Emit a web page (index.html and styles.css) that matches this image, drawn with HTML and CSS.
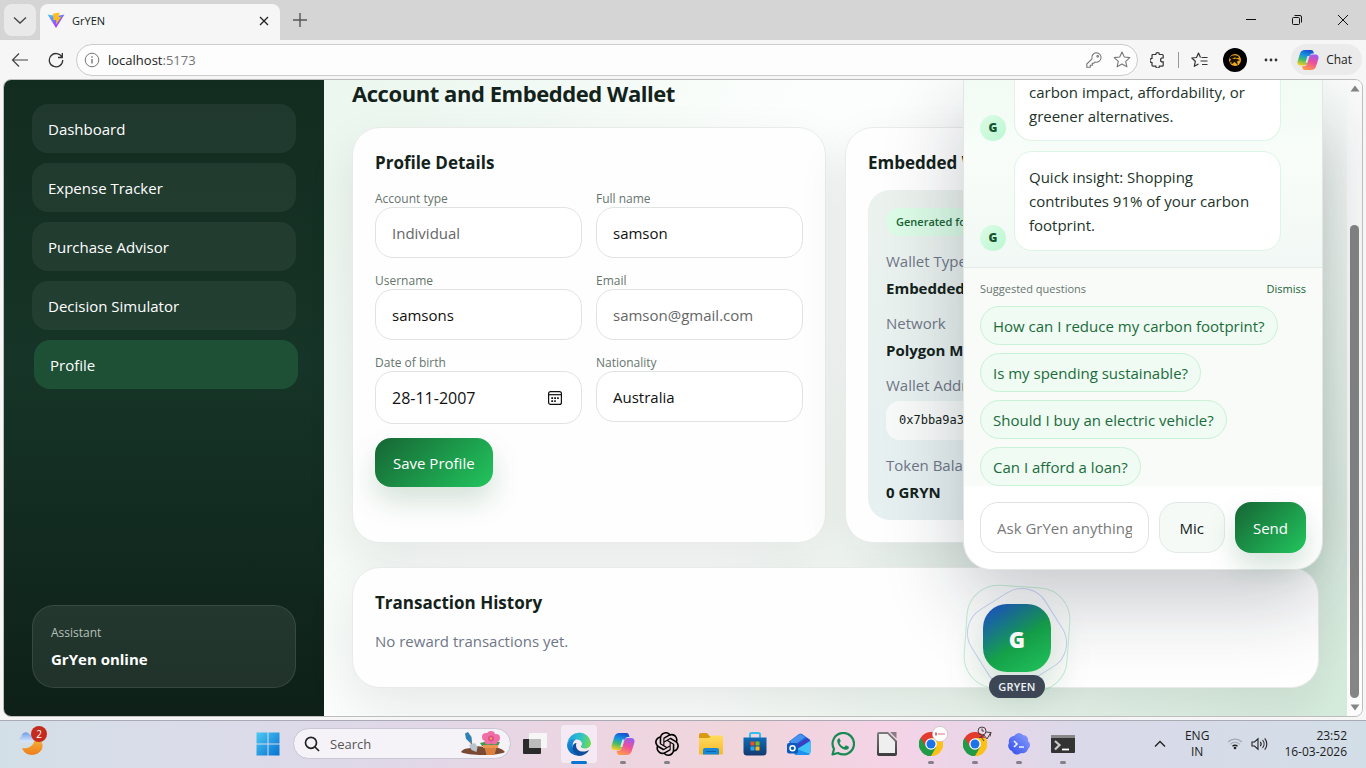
FILE: index.html
```html
<!DOCTYPE html>
<html lang="en">
<head>
    <meta charset="UTF-8">
    <meta name="viewport" content="width=device-width, initial-scale=1.0">
    <title>GrYEN</title>
    <link rel="stylesheet" href="styles.css">
</head>
<body>

<!-- shared gradients and symbols -->
<svg class="defs" width="0" height="0" aria-hidden="true">
    <defs>
        <linearGradient id="cpA" x1="0.6" y1="0" x2="0.3" y2="1">
            <stop offset="0" stop-color="#1b4fd0"/><stop offset=".35" stop-color="#1593e0"/>
            <stop offset=".65" stop-color="#43b96c"/><stop offset="1" stop-color="#f2cf1e"/>
        </linearGradient>
        <linearGradient id="cpB" x1="0.7" y1="0" x2="0.3" y2="1">
            <stop offset="0" stop-color="#9b5cf0"/><stop offset=".45" stop-color="#ec4f9d"/>
            <stop offset="1" stop-color="#ff9a4a"/>
        </linearGradient>
        <linearGradient id="edgeA" x1="0" y1="0.3" x2="1" y2="0.5">
            <stop offset="0" stop-color="#1f9fe0"/><stop offset=".55" stop-color="#2fc3c8"/><stop offset="1" stop-color="#6fdc50"/>
        </linearGradient>
        <linearGradient id="edgeB" x1="0" y1="0" x2="0.6" y2="1">
            <stop offset="0" stop-color="#1697e0"/><stop offset="1" stop-color="#0b5cb8"/>
        </linearGradient>
        <linearGradient id="winG" x1="0" y1="0" x2="1" y2="1">
            <stop offset="0" stop-color="#4cc9f5"/><stop offset="1" stop-color="#0570cf"/>
        </linearGradient>
        <linearGradient id="viteA" x1="0" y1="0" x2="0.7" y2="1">
            <stop offset="0" stop-color="#41d1ff"/><stop offset=".6" stop-color="#8b5cff"/><stop offset="1" stop-color="#bd34fe"/>
        </linearGradient>
        <linearGradient id="moonG" x1="0" y1="0" x2="0" y2="1">
            <stop offset="0" stop-color="#f6b73c"/><stop offset="1" stop-color="#ee7f1c"/>
        </linearGradient>
        <linearGradient id="cloudG" x1="0" y1="0" x2="0" y2="1">
            <stop offset="0" stop-color="#6f9fe8"/><stop offset="1" stop-color="#dbe9fb"/>
        </linearGradient>
        <linearGradient id="foldG" x1="0" y1="0" x2="0" y2="1">
            <stop offset="0" stop-color="#ffdc5e"/><stop offset="1" stop-color="#f5b92b"/>
        </linearGradient>
        <linearGradient id="storeG" x1="0" y1="0" x2="0" y2="1">
            <stop offset="0" stop-color="#0f6cb8"/><stop offset="1" stop-color="#14396e"/>
        </linearGradient>
        <linearGradient id="orbG" x1="0" y1="1" x2="1" y2="0">
            <stop offset="0" stop-color="#2f49e8"/><stop offset="1" stop-color="#8fa2ff"/>
        </linearGradient>
        <linearGradient id="docG" x1="0" y1="0" x2="0" y2="1">
            <stop offset="0" stop-color="#7d7d7d"/><stop offset="1" stop-color="#3c3c3c"/>
        </linearGradient>
        <symbol id="copilot" viewBox="0 0 24 24">
            <path fill="url(#cpA)" d="M8.5 1h7c1.400 0 2 .8 2.400 2l.6 2h-1.700c-1.500 0-2.500 1-3 2.500L11.300 15c-.5 1.700-1.300 3-3.100 3H4C1.200 18 0 16 .6 13.500L3.300 4.800C4 2.500 5.800 1 8.500 1z"/>
            <path fill="url(#cpB)" d="M15.500 23h-7c-1.400 0-2-.8-2.400-2l-.6-2.200h2.200c1.500 0 2.500-1 3-2.500L13.200 9c.5-1.700 1.300-3 3.100-3H20c2.800 0 4 2 3.400 4.500l-2.700 8.700C20 21.500 18.200 23 15.500 23z"/>
            <path fill="#fff" opacity=".75" d="M13.500 7.500h-2.200L9.200 15h2.100z"/>
        </symbol>
        <symbol id="chrome" viewBox="0 0 24 24">
            <path fill="#e33b2e" d="M12 12 1.600 6A12 12 0 0 1 22.400 6z"/>
            <path fill="#fbc116" d="M12 12 22.400 6A12 12 0 0 1 12 24z"/>
            <path fill="#229a48" d="M12 12 12 24A12 12 0 0 1 1.600 6z"/>
            <path fill="#e33b2e" d="M12 6h10.400L12 6.500 6.800 15 1.600 6z"/>
            <path fill="#fbc116" d="M22.400 6H12l5.200 9L12 24A12 12 0 0 0 22.400 6z"/>
            <path fill="#229a48" d="M1.600 6l5.200 9 10.400 0L12 24A12 12 0 0 1 1.600 6z"/>
            <circle cx="12" cy="12" r="5.800" fill="#fff"/><circle cx="12" cy="12" r="4.500" fill="#1a73e8"/>
        </symbol>
    </defs>
</svg>

<div class="tabbar">
    <button class="tab-menu" aria-label="Tab actions">
        <svg width="14" height="14" viewBox="0 0 14 14"><path d="M1 4.500l6 5.500 6-5.500" fill="none" stroke="#444" stroke-width="1.300"/></svg>
    </button>
    <div class="tab">
        <svg width="18" height="17" viewBox="0 0 18 17">
            <path d="M.5 2.500 9 16 17.500 2.500 9.500 4z" fill="url(#viteA)"/>
            <path d="M6 1.800 12.500.5 11.500 5h2.700L9 12.500l.3-4.500H6.500z" fill="#ffbd1c"/>
        </svg>
        <span class="tab-title">GrYEN</span>
        <button class="tab-close" aria-label="Close tab">
            <svg width="10" height="10" viewBox="0 0 10 10"><path d="M1 1l8 8M9 1L1 9" stroke="#222" stroke-width="1.300"/></svg>
        </button>
    </div>
    <button class="tab-new" aria-label="New tab">
        <svg width="16" height="16" viewBox="0 0 16 16"><path d="M8 1v14M1 8h14" stroke="#555" stroke-width="1.400"/></svg>
    </button>
    <div class="window-controls">
        <button aria-label="Minimize"><svg width="12" height="12" viewBox="0 0 12 12"><path d="M1 5.500h10" stroke="#111"/></svg></button>
        <button aria-label="Restore"><svg width="12" height="12" viewBox="0 0 12 12" fill="none" stroke="#111"><rect x="1.500" y="3.500" width="7" height="7" rx="1"/><path d="M3.500 1.500H9a1.500 1.500 0 0 1 1.500 1.500v5.500"/></svg></button>
        <button aria-label="Close"><svg width="12" height="12" viewBox="0 0 12 12"><path d="M1 1l10 10M11 1L1 11" stroke="#111"/></svg></button>
    </div>
</div>

<div class="toolbar">
    <button class="tool" aria-label="Back">
        <svg width="18" height="16" viewBox="0 0 18 16" fill="none" stroke="#444" stroke-width="1.200"><path d="M17 8H1.500M8 1.500L1.500 8 8 14.500"/></svg>
    </button>
    <button class="tool" aria-label="Reload">
        <svg width="16" height="16" viewBox="0 0 16 16" fill="none" stroke="#333" stroke-width="1.300"><path d="M14 5.200A6.700 6.700 0 1 0 14.700 8M14.300 1v4.500H10"/></svg>
    </button>
    <div class="address">
        <svg width="16" height="16" viewBox="0 0 16 16" fill="none" stroke="#777"><circle cx="8" cy="8" r="6.800"/><path d="M8 7v4.500M8 4.300v1.400" stroke-width="1.400"/></svg>
        <span class="url">localhost<span class="port">:5173</span></span>
        <svg width="16" height="16" viewBox="0 0 16 16" fill="none" stroke="#777" stroke-width="1.100"><path d="M10.500.8a4.700 4.700 0 0 0-4.500 6L.8 12v3.200h3.500v-2h2v-2h1.500l1.200-1.200a4.700 4.700 0 1 0 1.500-9.200z"/><circle cx="11.700" cy="4.300" r=".8"/></svg>
        <svg width="18" height="17" viewBox="0 0 18 17" fill="none" stroke="#777" stroke-width="1.100" stroke-linejoin="round"><path d="M9 1l2.300 5 5.500.6-4.100 3.700 1.200 5.500L9 13l-4.900 2.800 1.200-5.500L1.200 6.600 6.700 6z"/></svg>
    </div>
    <button class="tool" aria-label="Extensions">
        <svg width="16" height="16" viewBox="0 0 16 16" fill="none" stroke="#333" stroke-width="1.200"><path d="M3 2.500h2.800a1.800 1.800 0 0 1 3.600 0h2.800a1 1 0 0 1 1 1v2.400h-.6a2 2 0 0 0 0 4h.6v3.300a1 1 0 0 1-1 1H9.400a1.800 1.800 0 0 1-3.600 0H3a1 1 0 0 1-1-1v-2.600a2.100 2.100 0 0 1 0-4.200V3.500a1 1 0 0 1 1-1z"/></svg>
    </button>
    <span class="divider"></span>
    <button class="tool" aria-label="Favorites">
        <svg width="17" height="16" viewBox="0 0 17 16" fill="none" stroke="#333" stroke-width="1.200" stroke-linejoin="round"><path d="M9.500 5.500 7.500 1l-2 4.500L.8 6l3.500 3.300-1 5L7.500 12M10.500 5.500h6M9.500 9h7M11 12.500h5.500"/></svg>
    </button>
    <button class="avatar-btn" aria-label="Browser profile">
        <svg width="24" height="24" viewBox="0 0 24 24"><circle cx="12" cy="12" r="12" fill="#000"/><circle cx="12" cy="12" r="6" fill="#f0a818"/><path d="M6 10c2-3 6-3.500 9-2l1 2-4 .3 5 1.700-3 1.500 1 3.500-3.500-3-3 2.500v-2.500L6 15l2-3.500z" fill="#1b1200"/><path d="M9 10.500l3-1 2 .5-2.500 1z" fill="#f0a818"/></svg>
    </button>
    <button class="tool" aria-label="Settings and more">
        <svg width="14" height="4" viewBox="0 0 14 4" fill="#333"><circle cx="2" cy="2" r="1.400"/><circle cx="7" cy="2" r="1.400"/><circle cx="12" cy="2" r="1.400"/></svg>
    </button>
    <button class="chat-btn">
        <svg width="22" height="22"><use href="#copilot"/></svg>
        Chat
    </button>
</div>

<div class="page">
    <aside class="sidebar">
        <nav>
            <a href="#dashboard">Dashboard</a>
            <a href="#expenses">Expense Tracker</a>
            <a href="#advisor">Purchase Advisor</a>
            <a href="#simulator">Decision Simulator</a>
            <a href="#profile" class="active">Profile</a>
        </nav>
        <div class="assistant-status">
            <span>Assistant</span>
            <strong>GrYen online</strong>
        </div>
    </aside>

    <main class="content">
        <h1>Account and Embedded Wallet</h1>
        <div class="card-row">
            <section class="card">
                <h2>Profile Details</h2>
                <form class="profile-form">
                    <label>Account type<input type="text" value="Individual" disabled></label>
                    <label>Full name<input type="text" value="samson"></label>
                    <label>Username<input type="text" value="samsons"></label>
                    <label>Email<input type="email" value="samson@gmail.com" disabled></label>
                    <label>Date of birth
                        <span class="date-field">
                            <input type="text" value="28-11-2007">
                            <svg width="14" height="14" viewBox="0 0 14 14" fill="none" stroke="#111" stroke-width="1.200"><rect x=".6" y=".6" width="12.800" height="12.800" rx="2"/><path d="M.6 3.700h12.800"/><path d="M3.300 7.200h7.500M3.300 10.200h4.500" stroke-width="1.800" stroke-dasharray="1.800 1.100"/></svg>
                        </span>
                    </label>
                    <label>Nationality<input type="text" value="Australia"></label>
                    <button type="button" class="btn-primary">Save Profile</button>
                </form>
            </section>
            <section class="card">
                <h2>Embedded Wallet</h2>
                <div class="wallet">
                    <span class="badge">Generated for you</span>
                    <dl>
                        <dt>Wallet Type</dt>
                        <dd>Embedded</dd>
                        <dt>Network</dt>
                        <dd>Polygon Mainnet</dd>
                        <dt>Wallet Address</dt>
                        <dd class="wallet-address">0x7bba9a3</dd>
                        <dt>Token Balance</dt>
                        <dd>0 GRYN</dd>
                    </dl>
                </div>
            </section>
        </div>
        <section class="card">
            <h2>Transaction History</h2>
            <p class="empty">No reward transactions yet.</p>
        </section>
    </main>

    <div class="scrollbar">
        <svg width="10" height="7" viewBox="0 0 10 7"><path d="M5 .5 9.500 6.500H.5z" fill="#858585"/></svg>
        <div class="scroll-track"><div class="scroll-thumb"></div></div>
        <svg width="10" height="7" viewBox="0 0 10 7"><path d="M5 6.500 9.500.5H.5z" fill="#858585"/></svg>
    </div>

    <button class="orb" aria-label="Open GrYen assistant">
        <span class="ring ring-green"></span>
        <span class="ring ring-blue"></span>
        <span class="orb-core">G</span>
        <span class="orb-label">GRYEN</span>
    </button>

    <section class="chat">
        <div class="messages">
            <div class="message">
                <span class="bot">G</span>
                <p class="cut">carbon impact, affordability, or greener alternatives.</p>
            </div>
            <div class="message">
                <span class="bot">G</span>
                <p>Quick insight: Shopping contributes 91% of your carbon footprint.</p>
            </div>
        </div>
        <div class="suggestions">
            <div class="suggestions-head">
                <span>Suggested questions</span>
                <button>Dismiss</button>
            </div>
            <button class="chip">How can I reduce my carbon footprint?</button>
            <button class="chip">Is my spending sustainable?</button>
            <button class="chip">Should I buy an electric vehicle?</button>
            <button class="chip">Can I afford a loan?</button>
        </div>
        <form class="composer">
            <input type="text" placeholder="Ask GrYen anything" aria-label="Message">
            <button type="button" class="btn-mic">Mic</button>
            <button type="button" class="btn-primary">Send</button>
        </form>
    </section>
</div>

<footer class="taskbar">
    <div class="weather">
        <svg width="30" height="30" viewBox="0 0 30 30">
            <path d="M5 19c7 1.500 13-3 13-11 6 2 9 7 7 12-4 8-17 8-20-1z" fill="url(#moonG)"/>
            <path d="M4 13a3 3 0 0 1 .5-5.500 4.300 4.300 0 0 1 8-2 4 4 0 0 1 4 4V13z" fill="url(#cloudG)"/>
        </svg>
        <span class="count">2</span>
    </div>
    <button class="task" aria-label="Start">
        <svg width="24" height="24" viewBox="0 0 24 24" fill="url(#winG)"><path d="M.5.500h11v11H.5zM12.500.5h11v11h-11zM.5 12.500h11v11H.5zM12.500 12.500h11v11h-11z"/></svg>
    </button>
    <div class="search">
        <svg width="16" height="16" viewBox="0 0 16 16" fill="none" stroke="#222" stroke-width="1.700"><circle cx="7" cy="6.800" r="5.500"/><path d="M11 11l4 4"/></svg>
        <input type="search" placeholder="Search" aria-label="Search">
        <svg width="46" height="26" viewBox="0 0 46 26">
            <path d="M1 21c3-5 9-3 13-5 6-2 10 1 16 0 6 0 12 1 15 5-6 4-38 4-44 0z" fill="#7a4a35"/>
            <path d="M5 2.500 8 1l3.500 5 .5 5-2 .8-4-4z" fill="#2e80b5"/><path d="M10.500 10l1.500 4" stroke="#777" stroke-width="1.500"/>
            <path d="M9 14l6-2 2.500 4-1 5-5-2z" fill="#b9c4cc"/>
            <path d="M20 12l8-2 12 1-2 4H22z" fill="#3f9a4c"/>
            <path d="M24 15h13l-2.500 9h-8z" fill="#d9803f"/><path d="M23 14h15v3H23z" fill="#eb9550"/>
            <g fill="#ef6ea5"><circle cx="26" cy="6" r="4"/><circle cx="31" cy="4" r="4"/><circle cx="36" cy="7" r="4"/><circle cx="28" cy="10" r="3.500"/><circle cx="34" cy="10" r="3.500"/></g>
            <circle cx="31" cy="7.500" r="3" fill="#e04f88"/><circle cx="31" cy="7.500" r="1" fill="#f8c94b"/>
        </svg>
    </div>
    <button class="task" aria-label="Task view">
        <svg width="24" height="24" viewBox="0 0 24 24"><rect y="7" width="18" height="15" rx="1" fill="#2b2b2b"/><rect x="6" y="1" width="18" height="15" rx="1" fill="#f6f6f6"/><path d="M6 7h12v9H6z" fill="#bcbcbc"/></svg>
    </button>
    <button class="task open active" aria-label="Edge">
        <svg width="24" height="24" viewBox="0 0 24 24">
            <path d="M.3 11A12 12 0 0 1 24 10.500c.2 3.500-2.400 6-5.800 6-2.800 0-4.300-1-4.300-2 0-.7 1.100-1 1.100-2.800C15 9 12 7.500 8.800 7.500 4.800 7.500 2 9 .3 11z" fill="url(#edgeA)"/>
            <path d="M.1 12.500C.6 8.500 5 6.500 9 7.500c-3 1.500-4 5-3 8.500 1.200 4.200 5 7.500 8.500 7.700C7 25-.5 20 .1 12.500z" fill="url(#edgeB)"/>
            <path d="M9.500 11C8 14.500 10 19 15 19.500c3 .3 5.500-.5 7.300-1.700A12 12 0 0 1 14.500 23.700C8 23.500 4.500 18 6 13.500c.7-1.600 2-2.700 3.500-2.500z" fill="#0d4f9c"/>
        </svg>
    </button>
    <button class="task open" aria-label="Copilot"><svg width="24" height="24"><use href="#copilot"/></svg></button>
    <button class="task open" aria-label="ChatGPT">
        <svg width="24" height="24" viewBox="0 0 24 24"><path d="M22.282 9.821a5.985 5.985 0 0 0-.516-4.910 6.046 6.046 0 0 0-6.510-2.900A6.065 6.065 0 0 0 4.981 4.182a5.985 5.985 0 0 0-3.998 2.900 6.046 6.046 0 0 0 .743 7.097 5.980 5.980 0 0 0 .511 4.911 6.051 6.051 0 0 0 6.515 2.900A5.985 5.985 0 0 0 13.260 24a6.056 6.056 0 0 0 5.772-4.206 5.989 5.989 0 0 0 3.998-2.900 6.056 6.056 0 0 0-.748-7.073zm-9.022 12.608a4.476 4.476 0 0 1-2.876-1.041l.142-.080 4.778-2.758a.795.795 0 0 0 .393-.681v-6.737l2.020 1.169a.071.071 0 0 1 .038.052v5.583a4.504 4.504 0 0 1-4.495 4.494zm-9.661-4.125a4.471 4.471 0 0 1-.535-3.014l.142.085 4.783 2.758a.771.771 0 0 0 .781 0l5.843-3.369v2.332a.080.080 0 0 1-.033.062L9.740 19.950a4.499 4.499 0 0 1-6.141-1.646zM2.341 7.896a4.485 4.485 0 0 1 2.366-1.973V11.600a.766.766 0 0 0 .388.677l5.814 3.354-2.020 1.169a.076.076 0 0 1-.071 0l-4.830-2.787A4.504 4.504 0 0 1 2.341 7.872zm16.596 3.856L13.104 8.364 15.119 7.200a.076.076 0 0 1 .071 0l4.830 2.791a4.494 4.494 0 0 1-.677 8.104v-5.677a.790.790 0 0 0-.407-.667zm2.011-3.023l-.142-.085-4.774-2.782a.776.776 0 0 0-.785 0L9.409 9.230V6.897a.066.066 0 0 1 .028-.062l4.830-2.787a4.499 4.499 0 0 1 6.680 4.660zM8.307 12.863l-2.020-1.164a.080.080 0 0 1-.038-.057V6.074a4.499 4.499 0 0 1 7.376-3.454l-.142.081L8.704 5.459a.795.795 0 0 0-.393.681zm1.098-2.365l2.602-1.500 2.607 1.500v2.999l-2.597 1.500-2.607-1.500Z"/></svg>
    </button>
    <button class="task" aria-label="File Explorer">
        <svg width="24" height="24" viewBox="0 0 24 24"><path d="M0 3a2 2 0 0 1 2-2h6l2.500 3H22v6H0z" fill="#d99a12"/><path d="M0 6h10l2-2.500h10.500A1.500 1.500 0 0 1 24 5v16a1.500 1.500 0 0 1-1.500 1.500h-21A1.500 1.500 0 0 1 0 21z" fill="url(#foldG)"/><path d="M4 22.500V18a2 2 0 0 1 2-2h12a2 2 0 0 1 2 2v4.500z" fill="#1787d8"/><path d="M7 19h10v1H7z" fill="#0c5ea8"/></svg>
    </button>
    <button class="task" aria-label="Microsoft Store">
        <svg width="24" height="24" viewBox="0 0 24 24"><path d="M7 6V2.500A1.500 1.500 0 0 1 8.500 1h7A1.500 1.500 0 0 1 17 2.500V6" fill="none" stroke="#33bdf0" stroke-width="2"/><path d="M.5 5.500h23V20a3.500 3.500 0 0 1-3.500 3.500H4A3.500 3.500 0 0 1 .5 20z" fill="url(#storeG)"/><path d="M7.500 9.500h4v4h-4z" fill="#f05022"/><path d="M12.500 9.500h4v4h-4z" fill="#7eba26"/><path d="M7.500 14.500h4v4h-4z" fill="#28a8ea"/><path d="M12.500 14.500h4v4h-4z" fill="#fdb913"/></svg>
    </button>
    <button class="task" aria-label="Outlook">
        <svg width="24" height="24" viewBox="0 0 24 24"><path d="M2 9.500 12 2a3 3 0 0 1 3 0l7 5a3 3 0 0 1 1.500 2.500V19a4 4 0 0 1-4 4H8z" fill="#1b6fe0"/><path d="M3 9 13 2l5 3L6 14z" fill="#4a90ee"/><path d="M7 14 20 6l3 2-12 9z" fill="#3b3fbd"/><path d="M10 17l13.500-8v10a4 4 0 0 1-4 4H8z" fill="#3ec2f7"/><path d="M10 17l13 5a4 4 0 0 1-3.500 1H8z" fill="#2191ef"/><rect y="11" width="11" height="10.500" rx="2" fill="#0c59bd"/><circle cx="5.500" cy="16.200" r="2.500" fill="none" stroke="#fff" stroke-width="1.500"/></svg>
    </button>
    <button class="task" aria-label="WhatsApp">
        <svg width="24" height="24" viewBox="0 0 24 24"><path d="M1.500 22.500 3 17A10.700 10.700 0 1 1 7 21z" fill="none" stroke="#168a55" stroke-width="2.200" stroke-linejoin="round"/><path d="M8 6.200c-1.500.5-2 2-1.700 3.500.8 4 4 7 7.800 8 2 .4 3.600-.6 3.800-2.200.1-.5 0-.7-.5-1l-2-1c-.4-.2-.7-.1-1 .3l-.8 1c-.3.300-.5.300-.9.100-1.800-.8-3.100-2-4-3.700-.2-.4-.1-.6.1-.8l.7-.9c.2-.3.200-.5.100-.8l-.9-2c-.2-.5-.4-.5-.7-.5z" fill="#168a55"/></svg>
    </button>
    <button class="task" aria-label="LibreOffice">
        <svg width="24" height="24" viewBox="0 0 24 24"><path d="M4 0h9l9 9v13a2 2 0 0 1-2 2H4a2 2 0 0 1-2-2V2a2 2 0 0 1 2-2z" fill="url(#docG)"/><path d="M4 2h8.500L20 9.500V21H4z" fill="#efefef"/><path d="M15 0h6.500v6.500z" fill="#8a7d88"/></svg>
    </button>
    <button class="task open" aria-label="Chrome">
        <svg width="24" height="24"><use href="#chrome"/></svg>
        <svg class="mini" width="16" height="16" viewBox="0 0 16 16"><circle cx="8" cy="8" r="7.600" fill="#fff" stroke="#bbb" stroke-width=".6"/><path d="M3 6.500h2v3H3zM6 7.500h7v1H6z" fill="#e0727a"/></svg>
    </button>
    <button class="task open" aria-label="Chrome, second profile">
        <svg width="24" height="24"><use href="#chrome"/></svg>
        <svg class="mini" width="16" height="16" viewBox="0 0 16 16" fill="none" stroke="#4a4040"><circle cx="6" cy="5" r="4"/><path d="M6 2.500V5h2M3 12l5-3 3 4 4-7M10 6l5 .5-1 4M5 11l3 4"/></svg>
    </button>
    <button class="task open" aria-label="Cloud terminal">
        <svg width="24" height="24" viewBox="0 0 24 24"><path d="M7 4a5.500 5.500 0 0 1 9-1 5 5 0 0 1 5 6 5 5 0 0 1 0 8 5.500 5.500 0 0 1-7 4 5.500 5.500 0 0 1-9-2 5.500 5.500 0 0 1-3-8c-1-4 2-7 5-7z" fill="url(#orbG)"/><path d="M7 9l3 3-3 3M12 15h5" fill="none" stroke="#e6f2ff" stroke-width="1.600"/></svg>
    </button>
    <button class="task open" aria-label="Terminal">
        <svg width="24" height="24" viewBox="0 0 24 24"><rect y="3" width="24" height="18" rx="1" fill="#333"/><path d="M0 3h24v3H0z" fill="#888"/><path d="M4 9l4.500 4L4 17.500" fill="none" stroke="#c9c9c9" stroke-width="2.200"/><path d="M11 17.500h7" stroke="#fff" stroke-width="1.800"/></svg>
    </button>
    <div class="tray">
        <svg width="12" height="8" viewBox="0 0 12 8" fill="none" stroke="#222" stroke-width="1.400"><path d="M1 6.500l5-5 5 5"/></svg>
        <span class="lang">ENG<br>IN</span>
        <svg width="16" height="13" viewBox="0 0 16 13" fill="none"><path d="M1 5a10 10 0 0 1 14 0M3.300 7.300a6.500 6.500 0 0 1 9.400 0" stroke="#a5a9b3" stroke-width="1.100"/><path d="M5.500 9.300a3.500 3.500 0 0 1 5 0" stroke="#222" stroke-width="1.300"/><circle cx="8" cy="11" r="1.300" fill="#222"/></svg>
        <svg width="17" height="14" viewBox="0 0 17 14" fill="none" stroke="#222" stroke-width="1.100"><path d="M1 5v4h2.500L7 12.200V1.800L3.500 5zM9.300 4.800a3.500 3.500 0 0 1 0 4.400M11.500 3a6 6 0 0 1 0 8M13.700 1.300a8.700 8.700 0 0 1 0 11.400"/></svg>
        <span class="clock">23:52<br>16-03-2026</span>
    </div>
</footer>

</body>
</html>
```
FILE: styles.css
```css
* {
    box-sizing: border-box;
}

body {
    margin: 0;
    height: 100vh;
    display: flex;
    flex-direction: column;
    overflow: hidden;
    background: #f6f6f6;
    color: #13231b;
    font-family: "Segoe UI", "Open Sans", "Noto Sans", sans-serif;
    font-size: 15px;
}

button, input {
    font: inherit;
    color: inherit;
}

button {
    border: 0;
    padding: 0;
    background: none;
    cursor: pointer;
}

svg {
    flex: none;
    display: block;
}

.defs {
    position: absolute;
}

/* browser chrome */
.tabbar {
    flex: none;
    height: 40px;
    display: flex;
    padding: 4px 0 0 4px;
    background: #d5d5d5;
}

.tab-menu {
    display: grid;
    place-items: center;
    width: 32px;
    height: 32px;
    margin-right: 4px;
    border-radius: 8px;
    background: #e9e9e9;
}

.tab {
    display: flex;
    align-items: center;
    width: 240px;
    padding: 0 10px 3px 7px;
    border-radius: 8px 8px 0 0;
    background: #f6f6f6;
}

.tab-title {
    flex: 1;
    margin-left: 7px;
    font-size: 11px;
}

.tab-close {
    padding: 1px;
}

.tab-new {
    width: 40px;
    height: 32px;
    display: grid;
    place-items: center;
}

.window-controls {
    display: flex;
    height: 32px;
    margin-left: auto;
}

.window-controls button {
    display: grid;
    place-items: center;
    width: 46px;
}

.toolbar {
    flex: none;
    height: 39px;
    display: flex;
    align-items: center;
    padding: 0 4px 0 2px;
}

.tool {
    display: grid;
    place-items: center;
    width: 36px;
    height: 32px;
}

.address {
    flex: 1;
    display: flex;
    align-items: center;
    gap: 11px;
    height: 32px;
    margin: 0 2px;
    padding: 0 6px 0 7px;
    border: 1px solid #ccc;
    border-radius: 16px;
    background: #fdfdfd;
    font-size: 13px;
    color: #222;
}

.url {
    flex: 1;
    margin-left: -3px;
}

.port {
    color: #757575;
}

.divider {
    width: 1px;
    height: 16px;
    margin: 0 2px;
    background: #999;
}

.avatar-btn {
    margin: 0 6px;
}

.chat-btn {
    display: flex;
    align-items: center;
    gap: 7px;
    height: 31px;
    margin-left: 2px;
    padding: 0 10px 0 6px;
    border-radius: 16px;
    background: #ebebeb;
    font-size: 12px;
    color: #222;
}

/* page */
.page {
    position: relative;
    flex: 1;
    min-height: 0;
    display: flex;
    margin: 0 3px 3px;
    border: 1px solid #bdbdbd;
    border-radius: 8px;
    overflow: hidden;
    background:
        radial-gradient(circle at 100% 100%, #d4ebdb 0, rgba(212, 235, 219, 0) 45%),
        linear-gradient(125deg, #ebf7ef 20%, #fcfefd 45%);
}

.sidebar {
    flex: none;
    width: 320px;
    display: flex;
    flex-direction: column;
    justify-content: space-between;
    padding: 24px 28px 28px;
    background: linear-gradient(180deg, #132c20 0, #163427 45%, #0e2018 100%);
    color: #fff;
}

.sidebar nav {
    display: grid;
    gap: 10px;
}

.sidebar a {
    display: flex;
    align-items: center;
    height: 49px;
    padding: 0 16px;
    border-radius: 16px;
    background: rgba(255, 255, 255, 0.06);
    color: #fff;
    text-decoration: none;
}

.sidebar a.active {
    transform: translateX(2px);
    background: #1e5036;
}

.assistant-status {
    display: grid;
    gap: 8px;
    padding: 18px;
    border: 1px solid rgba(255, 255, 255, 0.1);
    border-radius: 22px;
    background: rgba(255, 255, 255, 0.08);
    line-height: 20px;
}

.assistant-status span {
    font-size: 12px;
    line-height: 17px;
    color: #b4c0b9;
}

.content {
    flex: 1;
    min-width: 0;
    display: flex;
    flex-direction: column;
    gap: 24px;
    padding: 0 28px;
}

h1 {
    margin: 0 0 -4px;
    font-size: 22px;
    line-height: 27px;
    letter-spacing: -0.02em;
}

.card-row {
    display: grid;
    grid-template-columns: 1fr 1fr;
    gap: 19px;
}

.card {
    min-width: 0;
    padding: 22px;
    border: 1px solid #e8ebea;
    border-radius: 28px;
    background: #fefefe;
    box-shadow: 0 20px 50px rgba(20, 25, 24, 0.09);
}

h2 {
    margin: 0 0 15px;
    font-size: 17px;
    line-height: 25px;
}

.profile-form {
    display: grid;
    grid-template-columns: 1fr 1fr;
    align-items: start;
    gap: 14px;
}

.profile-form label {
    font-size: 12px;
    line-height: 17px;
    color: #66756d;
}

.profile-form input,
.composer input {
    display: block;
    width: 100%;
    height: 51px;
    padding: 0 16px;
    border: 1px solid #dfe3e1;
    border-radius: 18px;
    background: #fff;
    font-size: 15px;
    color: #111;
}

.profile-form input:disabled {
    color: #666;
}

.date-field {
    position: relative;
    display: block;
}

.profile-form .date-field input {
    height: 53px;
    font-size: 16px;
}

.date-field svg {
    position: absolute;
    right: 20px;
    top: 20px;
}

.btn-primary {
    justify-self: start;
    height: 49px;
    padding: 0 18px;
    border-radius: 16px;
    background: linear-gradient(135deg, #166534, #22c55e);
    box-shadow: 0 14px 28px rgba(22, 101, 52, 0.18);
    color: #fff;
}

.wallet {
    padding: 18px 18px 15px;
    border-radius: 22px;
    background: linear-gradient(180deg, #ebf2ee, #e6f0f1);
}

.badge {
    display: inline-block;
    padding: 0 10px;
    border-radius: 14px;
    background: #dcfce7;
    color: #166534;
    font-size: 11px;
    font-weight: 600;
    line-height: 28px;
}

.wallet dl {
    margin: 11px 0 0;
}

.wallet dt {
    color: #6f7787;
    line-height: 28px;
}

.wallet dd {
    margin: 0 0 8px;
    font-weight: 700;
    line-height: 26px;
}

.wallet dd:last-child {
    margin-bottom: 0;
}

.wallet .wallet-address {
    height: 39px;
    margin: 2px 0 11px;
    padding: 0 13px;
    border-radius: 14px;
    background: #f8faf9;
    font-family: "DejaVu Sans Mono", monospace;
    font-size: 12px;
    font-weight: 400;
    line-height: 39px;
}

.empty {
    margin: 0 0 13px;
    line-height: 22px;
    color: #6f7787;
}

.scrollbar {
    flex: none;
    width: 15px;
    display: flex;
    flex-direction: column;
    align-items: center;
    padding: 5px 0;
    background: #fcfcfc;
}

.scroll-track {
    flex: 1;
    display: flex;
    align-items: flex-end;
    padding-bottom: 6px;
}

.scroll-thumb {
    width: 9px;
    height: 78%;
    border-radius: 5px;
    background: #858585;
}

/* floating assistant */
.orb {
    position: absolute;
    right: 311px;
    bottom: 18px;
    width: 68px;
    display: flex;
    flex-direction: column;
    align-items: center;
    gap: 3px;
}

.orb-core {
    position: relative;
    width: 68px;
    height: 68px;
    border-radius: 24px;
    background: linear-gradient(145deg, #1d4ed8, #16a34a 55%, #22c55e);
    box-shadow: 0 20px 40px rgba(22, 101, 52, 0.22);
    color: #fff;
    font-size: 22px;
    font-weight: 800;
    line-height: 70px;
}

.orb-label {
    position: relative;
    padding: 0 9px;
    border-radius: 12px;
    background: #3d4655;
    color: #eef2f6;
    font-size: 11px;
    font-weight: 600;
    letter-spacing: 0.02em;
    line-height: 23px;
}

.ring {
    position: absolute;
    border: 1px solid;
}

.ring-green {
    inset: -18px -18px 8px;
    border-color: rgba(34, 197, 94, 0.25);
    border-radius: 32px;
    transform: rotate(4deg);
}

.ring-blue {
    inset: -10px -10px 16px;
    border-color: rgba(80, 110, 230, 0.28);
    border-radius: 28px;
    transform: rotate(58deg);
}

.chat {
    position: absolute;
    top: 0;
    right: 39px;
    width: 360px;
    border: 1px solid #e2e7e4;
    border-top: 0;
    border-radius: 0 0 28px 28px;
    background: #fff;
    box-shadow: 0 30px 80px rgba(15, 23, 42, 0.24);
}

.messages {
    display: grid;
    gap: 10px;
    padding: 0 41px 16px 16px;
    border-bottom: 1px solid #e4eae7;
    background: linear-gradient(180deg, #f2fbf4, #f8fdf9 40%, #f2f8f5);
}

.message {
    display: flex;
    align-items: flex-end;
    gap: 8px;
}

.bot {
    flex: none;
    width: 26px;
    height: 26px;
    border-radius: 50%;
    background: linear-gradient(135deg, #dcfce7, #bbf7d0);
    color: #14532d;
    font-size: 12px;
    font-weight: 800;
    line-height: 26px;
    text-align: center;
}

.message p {
    flex: 1;
    margin: 0;
    padding: 13px 14px;
    border: 1px solid #dcf5e4;
    border-radius: 18px;
    background: #fff;
    color: #22332a;
    line-height: 24px;
}

.message .cut {
    padding-top: 0;
    padding-bottom: 12px;
    border-top: 0;
    border-radius: 0 0 18px 18px;
}

.suggestions {
    display: flex;
    flex-direction: column;
    align-items: flex-start;
    gap: 8px;
    padding: 12px 16px 0;
    background: #f9fbf9;
}

.suggestions-head {
    align-self: stretch;
    display: flex;
    justify-content: space-between;
    font-size: 11px;
    line-height: 18px;
    color: #66756d;
}

.suggestions-head button {
    color: #166534;
}

.chip {
    height: 39px;
    padding: 0 12px;
    border: 1px solid #c9f2d6;
    border-radius: 20px;
    background: #effbf3;
    color: #1b6b3a;
}

.composer {
    display: flex;
    gap: 10px;
    padding: 16px;
}

.composer input {
    flex: 1;
    width: auto;
    min-width: 0;
}

.composer input::placeholder {
    color: #7a7a7a;
}

.composer button {
    height: 51px;
}

.btn-mic {
    padding: 0 20px;
    border: 1px solid #e2e9e5;
    border-radius: 18px;
    background: #f5faf7;
}

/* taskbar */
.taskbar {
    flex: none;
    height: 48px;
    display: flex;
    align-items: center;
    padding-bottom: 2px;
    border-top: 1px solid #aaaab4;
    background: linear-gradient(90deg, #d3dfe7 0, #d9dce9 12%, #dfd8e8 28%, #ecd5e2 42%, #f0d5db 54%, #f4d3e7 66%, #dad9e9 79%, #d2dee7 100%);
}

.weather {
    position: relative;
    flex: none;
    width: 246px;
    padding-left: 17px;
}

.count {
    position: absolute;
    left: 31px;
    top: -3px;
    width: 16px;
    height: 16px;
    border-radius: 50%;
    background: #c42b1c;
    color: #fff;
    font-size: 10px;
    line-height: 16px;
    text-align: center;
}

.task {
    position: relative;
    flex: none;
    display: grid;
    place-items: center;
    width: 44px;
    height: 40px;
}

.task.active::before {
    content: "";
    position: absolute;
    inset: 0 3px;
    border: 1px solid #e5d8e2;
    border-radius: 4px;
    background: #f5eaf3;
}

.task svg {
    position: relative;
}

.task.open::after {
    content: "";
    position: absolute;
    left: 19px;
    bottom: 0;
    width: 6px;
    height: 3px;
    border-radius: 2px;
    background: #857f88;
}

.task.active::after {
    left: 14px;
    width: 16px;
    background: #0a74d1;
}

.task .mini {
    position: absolute;
    left: 23px;
    top: 2px;
}

.search {
    flex: none;
    display: flex;
    align-items: center;
    gap: 10px;
    width: 218px;
    height: 31px;
    margin: 0 2px 0 3px;
    padding: 0 4px 0 10px;
    border: 1px solid #c9c6d5;
    border-radius: 16px;
    background: #f5f2f8;
}

.search input {
    flex: 1;
    min-width: 0;
    padding: 0;
    border: 0;
    background: none;
    font-size: 13px;
}

.search input::placeholder {
    color: #555;
}

.tray {
    display: flex;
    align-items: center;
    margin-left: auto;
    padding-right: 19px;
    color: #1b1b1b;
    font-size: 12px;
    line-height: 16px;
}

.lang {
    margin: 0 18px 0 19px;
    text-align: center;
}

.tray svg + svg {
    margin-left: 8px;
}

.clock {
    margin-left: 16px;
    text-align: right;
}
```
